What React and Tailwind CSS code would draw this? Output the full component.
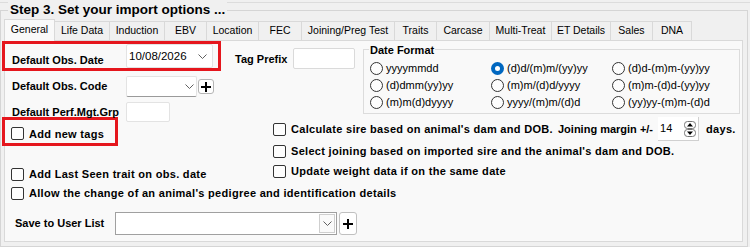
import React from 'react';

const tabs = [
    { label: 'General', w: 'w-[51px]' },
    { label: 'Life Data', w: 'w-[55px]' },
    { label: 'Induction', w: 'w-[55px]' },
    { label: 'EBV', w: 'w-[42px]' },
    { label: 'Location', w: 'w-[52px]' },
    { label: 'FEC', w: 'w-[43px]' },
    { label: 'Joining/Preg Test', w: 'w-[93px]' },
    { label: 'Traits', w: 'w-[42px]' },
    { label: 'Carcase', w: 'w-[53px]' },
    { label: 'Multi-Treat', w: 'w-[62px]' },
    { label: 'ET Details', w: 'w-[59px]' },
    { label: 'Sales', w: 'w-[42px]' },
    { label: 'DNA', w: 'w-[39px]' },
];

const formats = [
    ['yyyymmdd', false], ['(d)d/(m)m/(yy)yy', true], ['(d)d-(m)m-(yy)yy', false],
    ['(d)dmm(yy)yy', false], ['(m)m/(d)d/yyyy', false], ['(m)m-(d)d-(yy)yy', false],
    ['(m)m(d)dyyyy', false], ['yyyy/(m)m/(d)d', false], ['(yy)yy-(m)m-(d)d', false],
];

const Check = () => (
    <span className="block w-[13px] h-[13px] shrink-0 rounded-[2px] border border-[#333] bg-[#fdfdfd]" />
);

const Chevron = () => (
    <svg width="9" height="5" viewBox="0 0 9 5" className="shrink-0">
        <path d="M0.5 0.5 L4.5 4.5 L8.5 0.5" fill="none" stroke="#606060" strokeWidth="1" />
    </svg>
);

const Plus = () => (
    <svg width="10" height="10" viewBox="0 0 10 10">
        <path d="M5 0v10M0 5h10" stroke="#000" strokeWidth="2" />
    </svg>
);

const Radio = ({ on, label }) => (
    <div className="flex items-center">
        {on ? (
            <span className="flex items-center justify-center w-[13px] h-[13px] rounded-full bg-[#0067c0]">
                <span className="w-[5px] h-[5px] rounded-full bg-white" />
            </span>
        ) : (
            <span className="w-[13px] h-[13px] rounded-full border border-[#333] bg-[#fdfdfd]" />
        )}
        <span className="ml-[3px] text-[11px] leading-[13px] whitespace-nowrap">{label}</span>
    </div>
);

const CheckRow = ({ label, className = '' }) => (
    <div className={`flex items-center ${className}`}>
        <Check />
        <span className="ml-[5px] text-[11px] leading-[13px] font-bold tracking-[0.3px] whitespace-nowrap">{label}</span>
    </div>
);

const App = () => {
    return (
        <div className="w-[750px] h-[247px] bg-[#f0f0f0] overflow-hidden font-['Liberation_Sans',Arial,sans-serif] text-black">
            <div className="pt-[2px]">
                <div className="border-t border-[#dcdcdc] pt-[7px]">
                    {/* Group box */}
                    <div className="relative w-[748px] h-[237px] border border-[#d5d5d5]">
                        <div className="absolute left-[7px] top-[-9px] bg-[#f0f0f0] px-[2px] text-[13.5px] leading-[16px] font-bold whitespace-nowrap">
                            Step 3. Set your import options ...
                        </div>

                        {/* Tabs */}
                        <div className="flex items-end ml-[3px] mt-[8px] h-[21px]">
                            {tabs.map((tab, idx) => (
                                idx === 0 ? (
                                    <div key={tab.label} className={`${tab.w} h-[22px] -mb-[1px] relative z-10 flex items-center justify-center pb-[2px] border border-b-0 border-[#d9d9d9] bg-[#f9f9f9] text-[10.5px]`}>
                                        {tab.label}
                                    </div>
                                ) : (
                                    <div key={tab.label} className={`${tab.w} h-[19px] flex items-center justify-center border-t border-r border-[#d9d9d9] bg-[#f0f0f0] text-[10.5px] whitespace-nowrap`}>
                                        {tab.label}
                                    </div>
                                )
                            ))}
                        </div>

                        {/* Panel */}
                        <div className="ml-[3px] w-[739px] h-[202px] border border-[#d9d9d9] bg-[#f9f9f9]">
                            <div className="flex">
                                {/* Left column */}
                                <div className="-ml-[3px] w-[233px] shrink-0">
                                    <div className="flex items-start h-[30px] w-[219px] border-[3px] border-[#e5161d]">
                                        <span className="ml-[7px] mt-[10px] w-[114px] text-[11px] leading-[13px] font-bold whitespace-nowrap">Default Obs. Date</span>
                                        <div className="flex items-center justify-between w-[87px] h-[24px] pl-[2px] pr-[5px] bg-white border border-[#e3e3e3] rounded-[2px]">
                                            <span className="text-[11.5px] leading-[13px]">10/08/2026</span>
                                            <Chevron />
                                        </div>
                                    </div>

                                    <div className="flex items-center h-[21px] mt-[5px]">
                                        <span className="ml-[10px] w-[114px] text-[11px] leading-[13px] font-bold whitespace-nowrap">Default Obs. Code</span>
                                        <div className="flex items-center justify-end w-[71px] h-[21px] pr-[2px] bg-white border border-[#e3e3e3] border-b-[#9a9a9a] rounded-[2px]">
                                            <Chevron />
                                        </div>
                                        <div className="flex items-center justify-center w-[16px] h-[15px] ml-[1px] bg-white border border-[#b5b5b5] rounded-[3px]">
                                            <Plus />
                                        </div>
                                    </div>

                                    <div className="flex items-center h-[20px] mt-[5px]">
                                        <span className="ml-[10px] w-[114px] text-[11px] leading-[13px] font-bold whitespace-nowrap">Default Perf.Mgt.Grp</span>
                                        <div className="w-[44px] h-[20px] bg-white border border-[#e3e3e3] rounded-[2px]" />
                                    </div>

                                    <div className="flex items-start h-[29px] w-[116px] -mt-[5px] border-[3px] border-[#e5161d]">
                                        <div className="ml-[6px] mt-[7px]"><Check /></div>
                                        <span className="ml-[5px] mt-[8px] text-[11px] leading-[13px] font-bold tracking-[0.3px] whitespace-nowrap">Add new tags</span>
                                    </div>

                                    <CheckRow label="Add Last Seen trait on obs. date" className="ml-[9px] mt-[22px]" />
                                </div>

                                {/* Right column */}
                                <div className="flex-1">
                                    <div className="flex items-start">
                                        <span className="mt-[12px] w-[58px] text-[11px] leading-[13px] font-bold whitespace-nowrap">Tag Prefix</span>
                                        <div className="mt-[7px] w-[62px] h-[21px] bg-white border border-[#dadada] rounded-[2px]" />
                                        <div className="relative ml-[8px] mt-[8px] w-[377px] h-[65px] border border-[#dcdcdc]">
                                            <span className="absolute left-[5px] top-[-6px] bg-[#f9f9f9] px-[1px] text-[11px] leading-[13px] font-bold">Date Format</span>
                                            <div className="grid grid-cols-[121px_121px_1fr] grid-rows-[18px_17px_17px] items-center pl-[6px] pt-[9px]">
                                                {formats.map(([label, on]) => (
                                                    <Radio key={label} label={label} on={on} />
                                                ))}
                                            </div>
                                        </div>
                                    </div>

                                    <div className="ml-[38px] mt-[5px]">
                                        <div className="flex items-center h-[20px]">
                                            <CheckRow label="Calculate sire based on animal's dam and DOB." className="w-[285px] shrink-0" />
                                            <span className="text-[11px] leading-[13px] font-bold whitespace-nowrap">Joining margin +/-</span>
                                            <div className="flex items-center justify-between ml-[5px] w-[41px] h-[24px] pl-[2px] pr-[2px] bg-white border-b border-r border-[#d0d0d0]">
                                                <span className="text-[11px] leading-[13px]">14</span>
                                                <svg width="12" height="16" viewBox="0 0 12 16">
                                                    <rect x="0.5" y="0.5" width="11" height="7" rx="3" fill="#fff" stroke="#777" />
                                                    <path d="M3 5.5 L6 2 L9 5.5 Z" fill="#000" />
                                                    <rect x="0.5" y="8.5" width="11" height="7" rx="3" fill="#fff" stroke="#777" />
                                                    <path d="M3 10.5 L6 14 L9 10.5 Z" fill="#000" />
                                                </svg>
                                            </div>
                                            <span className="ml-[7px] text-[11px] leading-[13px] font-bold tracking-[0.3px]">days.</span>
                                        </div>
                                        <CheckRow label="Select joining based on imported sire and the animal's dam and DOB." className="h-[20px] mt-[2px]" />
                                        <CheckRow label="Update weight data if on the same date" className="h-[20px]" />
                                    </div>
                                </div>
                            </div>

                            <CheckRow label="Allow the change of an animal's pedigree and identification details" className="ml-[6px] mt-[6px]" />

                            <div className="flex items-center mt-[12px]">
                                <span className="ml-[10px] w-[100px] text-[11px] leading-[13px] font-bold whitespace-nowrap">Save to User List</span>
                                <div className="flex items-center justify-end w-[222px] h-[23px] p-[1px] bg-white border border-[#a0a0a0]">
                                    <div className="flex items-center justify-center w-[16px] h-full border border-[#cfcfcf] bg-[#fafafa]">
                                        <Chevron />
                                    </div>
                                </div>
                                <div className="flex items-center justify-center ml-[2px] w-[18px] h-[23px] bg-white border border-[#c0c0c0] rounded-[3px]">
                                    <Plus />
                                </div>
                            </div>
                        </div>
                    </div>
                </div>
            </div>
        </div>
    );
};

export default App;
